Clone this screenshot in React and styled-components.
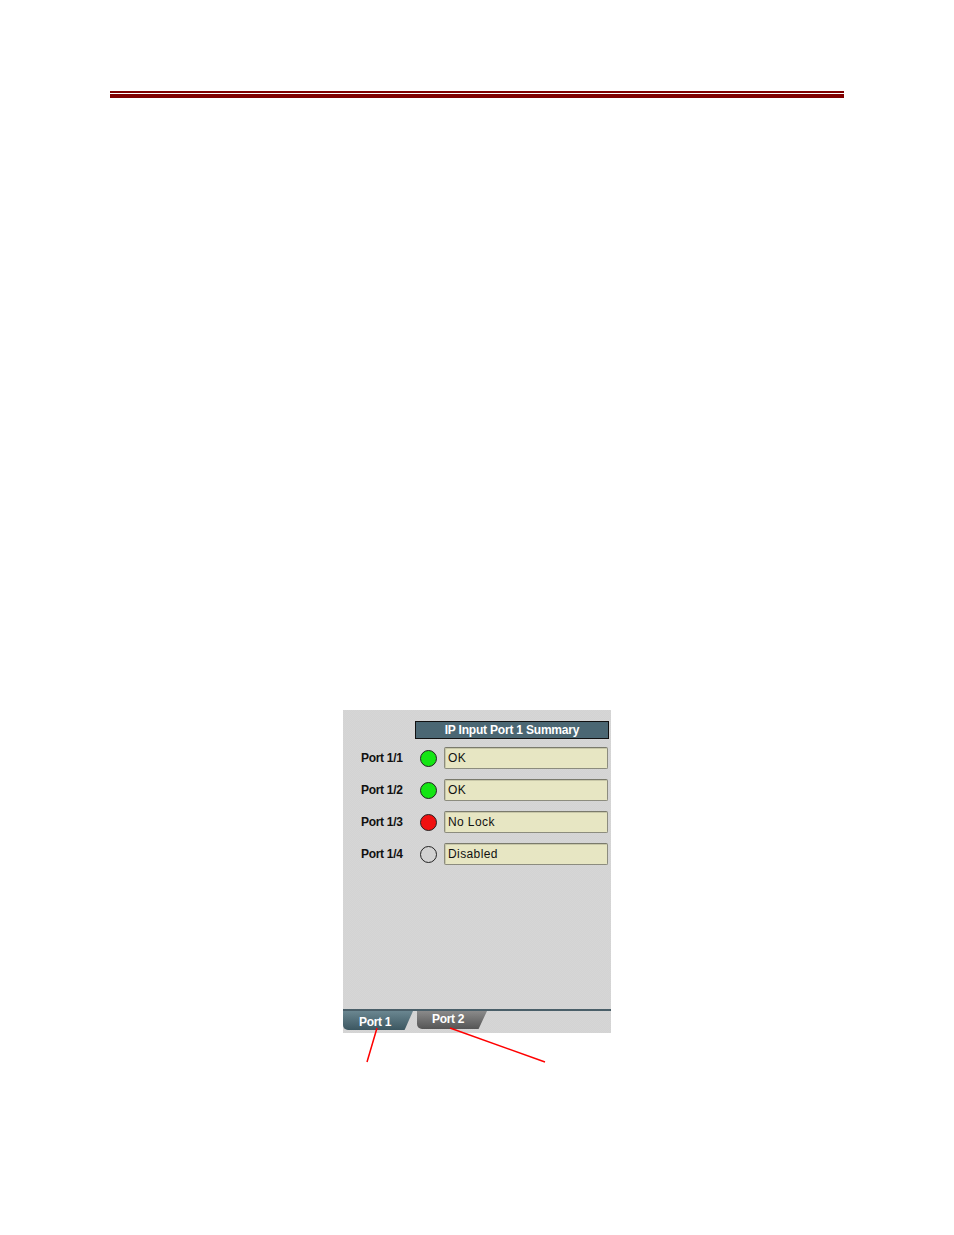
import styled, { createGlobalStyle } from "styled-components";

const Global = createGlobalStyle`
body {
  margin: 0;
  background: #fff;
  font-family: "Liberation Sans", Arial, sans-serif;
}
`

const Page = styled.div`
width: 954px;
height: 1235px;
position: relative;
display: flow-root;
`

const Rule = styled.div`
margin: 91px 0 0 110px;
width: 734px;
border-top: 2px solid #800000;
padding-top: 1px;
&::after {
  content: "";
  display: block;
  height: 4px;
  background: #800000;
}
`

const Panel = styled.div`
margin: 612px 0 0 343px;
width: 268px;
height: 323px;
background-color: #d3d3d3;
background-image: conic-gradient(rgba(255,255,255,0.08) 25%, transparent 0 50%, rgba(255,255,255,0.08) 0 75%, transparent 0);
background-size: 2px 2px;
display: flex;
flex-direction: column;
`

const Body = styled.div`
flex: 1;
padding: 11px 2px 0 18px;
display: flex;
flex-direction: column;
`

const Header = styled.div`
margin-left: 54px;
height: 16px;
background: #4b6773;
border: 1px solid #111;
color: #fff;
font-weight: bold;
font-size: 12px;
letter-spacing: -0.2px;
text-align: center;
line-height: 16px;
margin-bottom: 8px;
`

const Row = styled.div`
display: flex;
align-items: center;
height: 22px;
margin-bottom: 10px;
`

const Label = styled.div`
width: 58px;
font-size: 12px;
font-weight: bold;
letter-spacing: -0.3px;
color: #111;
`

const Led = styled.div`
width: 17px;
height: 17px;
border-radius: 50%;
border: 1px solid #222;
box-sizing: border-box;
background: ${p => p.color};
margin: 0 7px 0 1px;
`

const Field = styled.div`
width: 164px;
height: 22px;
box-sizing: border-box;
background-color: #e7e6c3;
border: 1px solid #8c8c7e;
border-top-color: #7a7a6c;
border-radius: 2px;
box-shadow: inset 1px 1px 0 #c8c7a8;
font-size: 12px;
line-height: 21px;
padding-left: 3px;
color: #111;
letter-spacing: 0.4px;
`

const TabBar = styled.div`
border-top: 2px solid #4a5f69;
height: 22px;
display: flex;
gap: 4px;
`

const Tab = styled.div`
width: 70px;
height: ${p => p.active ? 19 : 18}px;
background: ${p => p.active
  ? "linear-gradient(#6a8690, #3c5761)"
  : "linear-gradient(#8a8a8a, #555)"};
clip-path: polygon(0 0, 100% 0, 88% 100%, 0 100%);
border-bottom-left-radius: 5px;
color: #fff;
font-weight: bold;
font-size: 12px;
letter-spacing: -0.3px;
padding-left: ${p => p.active ? 16 : 15}px;
box-sizing: border-box;
line-height: ${p => p.active ? 22 : 17}px;
`

const Arrows = styled.svg`
position: absolute;
left: 0;
top: 0;
pointer-events: none;
`

const ports = [
  { name: "Port 1/1", color: "#14e614", status: "OK" },
  { name: "Port 1/2", color: "#14e614", status: "OK" },
  { name: "Port 1/3", color: "#f01010", status: "No Lock" },
  { name: "Port 1/4", color: "#d2d2d2", status: "Disabled" },
]

export default function App() {
  return (
    <Page>
      <Global />
      <Rule />
      <Panel>
        <Body>
          <Header>IP Input Port 1 Summary</Header>
          {ports.map(p => (
            <Row key={p.name}>
              <Label>{p.name}</Label>
              <Led color={p.color} />
              <Field>{p.status}</Field>
            </Row>
          ))}
        </Body>
        <TabBar>
          <Tab active>Port 1</Tab>
          <Tab>Port 2</Tab>
        </TabBar>
      </Panel>
      <Arrows width="954" height="1235">
        <line x1="377" y1="1028" x2="367" y2="1062" stroke="#f00" strokeWidth="1.5" />
        <line x1="450" y1="1028" x2="545" y2="1062" stroke="#f00" strokeWidth="1.5" />
      </Arrows>
    </Page>
  )
}
